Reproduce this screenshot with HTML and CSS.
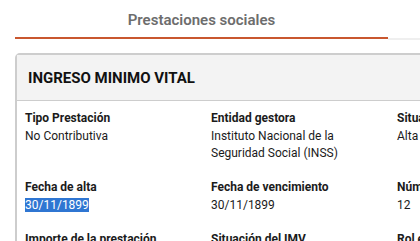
FILE: index.html
```html
<!DOCTYPE html>
<html>
    <head>
        <meta charset="UTF-8">
        <meta name="viewport" content="width=device-width, initial-scale=1.0">
        <link rel="stylesheet" href="styles.css">
    </head>
    <body>
        <div class="tabs">
            <div class="tab active">Prestaciones sociales</div>
            <div class="tabRest"></div>
        </div>

        <div class="card">
            <div class="cardHeader">INGRESO MINIMO VITAL</div>
            <div class="cardBody">
                <div class="field">
                    <div class="label">Tipo Prestación</div>
                    <div class="value">No Contributiva</div>
                </div>
                <div class="field">
                    <div class="label">Entidad gestora</div>
                    <div class="value">Instituto Nacional de la Seguridad Social (INSS)</div>
                </div>
                <div class="field">
                    <div class="label">Situación</div>
                    <div class="value">Alta</div>
                </div>

                <div class="field">
                    <div class="label">Fecha de alta</div>
                    <div class="value"><span class="selected">30/11/1899</span></div>
                </div>
                <div class="field">
                    <div class="label">Fecha de vencimiento</div>
                    <div class="value">30/11/1899</div>
                </div>
                <div class="field">
                    <div class="label">Número de miembros</div>
                    <div class="value">12</div>
                </div>

                <div class="field">
                    <div class="label">Importe de la prestación</div>
                    <div class="value">0,00 €</div>
                </div>
                <div class="field">
                    <div class="label">Situación del IMV</div>
                    <div class="value">Activa</div>
                </div>
                <div class="field">
                    <div class="label">Rol en la unidad</div>
                    <div class="value">Titular</div>
                </div>
            </div>
        </div>
    </body>
</html>
```

FILE: styles.css
```css
body {
    margin: 0;
    width: 420px;
    height: 241px;
    overflow: hidden;
    font-family: Roboto, "Liberation Sans", sans-serif;
    color: #1b1b1b;
    background: white;
}

.tabs {
    display: flex;
    padding-left: 15px;
    padding-top: 8px;
}

.tab {
    width: 373px;
    flex: none;
    text-align: center;
    font-size: 15px;
    font-weight: 600;
    color: #6d6d6d;
    height: 29px;
    line-height: 25px;
    border-bottom: 2px solid #c9572f;
}

.tabRest {
    flex: 1;
    border-bottom: 2px solid #efefef;
    margin-bottom: -1px;
}

.card {
    margin-top: 14px;
    margin-left: 15px;
    width: 500px;
    border: 2px solid #cdcdcd;
    border-radius: 5px 0 0 0;
}

.cardHeader {
    background-color: #f3f3f3;
    height: 45px;
    line-height: 46px;
    padding-left: 11px;
    font-size: 15px;
    font-weight: 700;
    color: #111;
    border-bottom: 1px solid #cdcdcd;
}

.cardBody {
    display: grid;
    grid-template-columns: repeat(3, 186px);
    padding: 8px 0 0 8px;
    row-gap: 16px;
}

.field {
    padding-right: 20px;
}

.label {
    font-size: 12px;
    font-weight: 700;
    line-height: 19px;
    color: #1b1b1b;
}

.value {
    font-size: 12px;
    line-height: 17px;
    color: #1b1b1b;
}

.selected {
    background-color: #2f76d2;
    color: white;
}
```
